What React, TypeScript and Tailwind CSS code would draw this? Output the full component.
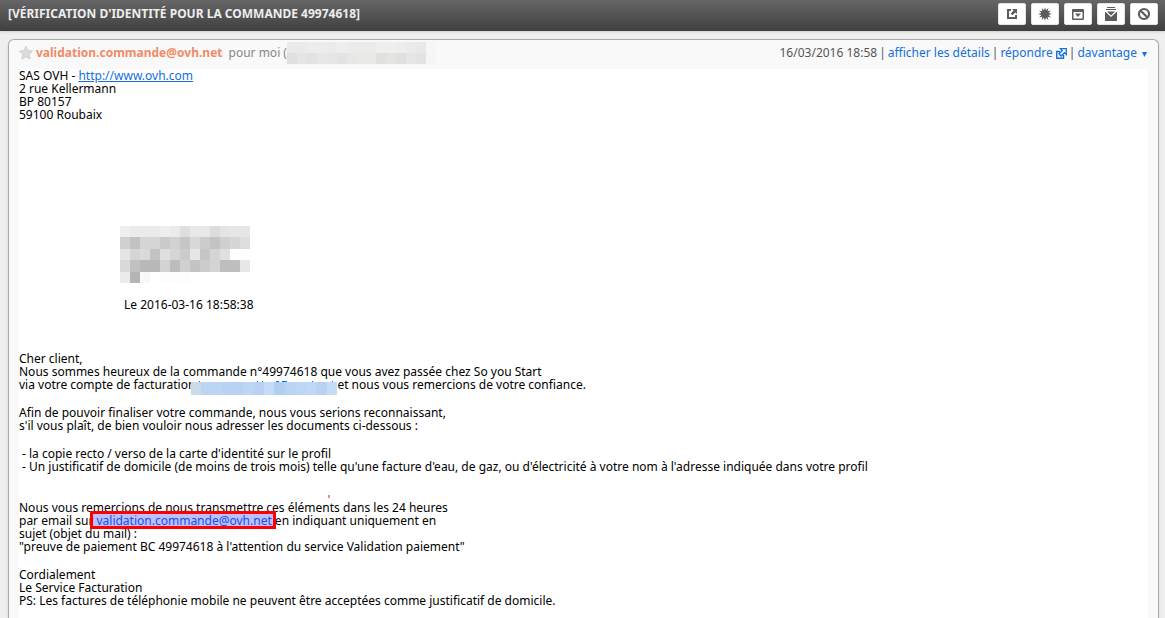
import type { FC, ReactNode } from "react";
import React from "react";

const Mosaic: FC<{
  rows: string[];
  cellW: number;
  cellH: number;
  className: string;
}> = ({ rows, cellW, cellH, className }) => {
  const cols = rows[0].split(" ").length;
  return (
    <svg
      className={className}
      viewBox={`0 0 ${cols * cellW} ${rows.length * cellH}`}
      preserveAspectRatio="none"
      shapeRendering="crispEdges"
      aria-hidden="true"
    >
      {rows.map((row, y) =>
        row
          .split(" ")
          .map((fill, x) => (
            <rect
              key={`${x}-${y}`}
              x={x * cellW}
              y={y * cellH}
              width={cellW}
              height={cellH}
              fill={`#${fill}`}
            />
          ))
      )}
    </svg>
  );
};

const nameRows = [
  "eeeeee ebebeb ebebeb ebebeb eeeeee ebebeb dedede e8e8e8 e8e8e8 dcdcdc e4e4e4 e6e6e6 e6e6e6",
  "d0d0d0 c2c2c2 d6d6d6 d5d5d5 cacaca d1d1d1 c6c6c6 d8d8d8 cbcbcb c4c4c4 cfcfcf d6d6d6 dedede",
  "e5e5e5 d5d5d5 dadada c3c3c3 dfdfdf d5d5d5 cbcbcb e6e6e6 c6c6c6 d5d5d5 e0e0e0 ffffff ffffff",
  "dadada c1c1c1 b9b9b9 b9b9b9 d3d3d3 bdbdbd d0d0d0 c4c4c4 cccccc d4d4d4 bebebe bebebe e7e7e7",
  "ebebeb b5b5b5 f8f8f8 ffffff fdfdfd fdfdfd fdfdfd ffffff ffffff ffffff ffffff ffffff ffffff",
];

const recipientRows = [
  "eaeaea eaeaea ededed ececec ebebeb eeeeee ebebea ebebea ebebea efefef efefef ededed ebebeb e8e8e8 f6f6f6",
  "e0e0e0 e5e5e5 e2e2e2 e7e7e7 e6e6e6 e3e3e3 e7e7e7 e9e9e6 e9e9e6 e0e0de e4e4e2 e0e0de e6e6e6 e3e3e3 f6f6f6",
];

const accountRows = [
  "cddbe8 bcd5f4 bcd5f4 bad3f4 b9d2f3 bdd6f5 b9d2f3 c5dbf6 b0cff3 b9d4f5 bdd6f5 c0d8f5 b9d4f3 c5dcf6",
];

// tips of the tall letters that stick out above the account mosaic, [x, width]
const accountTips = [
  [8, 1],
  [66, 1],
  [71, 1],
  [85, 3],
  [91, 5],
  [121, 1],
  [141, 1],
];

const burstPoints = Array.from({ length: 24 }, (_, i) => {
  const r = i % 2 ? 3.8 : 6.8;
  const a = (i * Math.PI) / 12;
  return `${7 + r * Math.sin(a)},${7 - r * Math.cos(a)}`;
}).join(" ");

const ToolButton: FC<{ label: string; children: ReactNode }> = ({
  label,
  children,
}) => (
  <button
    type="button"
    aria-label={label}
    className="flex h-[22px] w-7 items-center justify-center rounded-xs border border-[#e4e4e4] bg-white text-[#5c5c5c]"
  >
    <svg width="14" height="14" viewBox="0 0 14 14" fill="none">
      {children}
    </svg>
  </button>
);

const Toolbar = () => (
  <div className="flex gap-[5px]">
    <ToolButton label="Ouvrir dans une nouvelle fenêtre">
      <path d="M6 3H3v8h8V8" stroke="currentColor" strokeWidth="2" />
      <path d="M7 2h5v5l-1.600-1.600L7.500 8.300 5.700 6.500l2.900-2.900z" fill="currentColor" />
    </ToolButton>
    <ToolButton label="Marquer comme non lu">
      <polygon points={burstPoints} fill="currentColor" />
    </ToolButton>
    <ToolButton label="Archiver">
      <path
        d="M2 2h10a1 1 0 0 1 1 1v9a1 1 0 0 1-1 1H2a1 1 0 0 1-1-1V3a1 1 0 0 1 1-1zM2.500 5v6.500h9V5z"
        fill="currentColor"
        fillRule="evenodd"
      />
      <path d="M4 6.500h6L7 10z" fill="currentColor" />
    </ToolButton>
    <ToolButton label="Déplacer">
      <path d="M3 .5h8M2 2.500h10" stroke="currentColor" />
      <path
        d="M1 4.500l6 5.500 6-5.500V14H1zM3 4.500h8L7 8.500z"
        fill="currentColor"
      />
    </ToolButton>
    <ToolButton label="Indésirable">
      <circle cx="7" cy="7" r="5" stroke="currentColor" strokeWidth="2.2" />
      <path d="M3.500 3.500l7 7" stroke="currentColor" strokeWidth="2.2" />
    </ToolButton>
  </div>
);

const MessageHeader = () => (
  <div className="flex h-[29px] items-center justify-between pr-[11px] pb-[3px] pl-[10px] text-xs">
    <div className="flex items-center">
      <button type="button" aria-label="Suivre" className="mr-[3px]">
        <svg width="14" height="14" viewBox="0 0 14 14" className="block">
          <path
            d="M7 .5l1.900 4.200 4.600.5-3.400 3.100 1 4.700L7 10.700 2.900 13l1-4.700L.5 5.200l4.600-.5z"
            fill="#dcdcdc"
            stroke="#cecece"
          />
        </svg>
      </button>
      <span className="font-bold text-[#f08b68]">
        validation.commande@ovh.net
      </span>
      <span className="ml-[6px] text-[#888]">pour moi (</span>
      <Mosaic
        rows={recipientRows}
        cellW={10}
        cellH={11}
        className="h-[22px] w-[149px]"
      />
    </div>
    <div className="flex items-center gap-[2px] text-[#555]">
      <span>16/03/2016 18:58</span>
      <span>|</span>
      <a href="#details" className="text-[#1370dc]">
        afficher les détails
      </a>
      <span>|</span>
      <a href="#reply" className="flex items-center gap-[3px] text-[#1370dc]">
        répondre
        <svg width="11" height="11" viewBox="0 0 11 11" fill="none">
          <path
            d="M4 3.500H.7v6.800h6.800V7"
            stroke="currentColor"
            strokeWidth="1.400"
          />
          <path
            d="M4.500.7h5.800v5.800L8.500 4.700 5.200 8 3 5.800l3.300-3.300z"
            fill="#fff"
            stroke="currentColor"
            strokeWidth="1.300"
          />
        </svg>
      </a>
      <span>|</span>
      <a href="#more" className="flex items-center gap-[5px] text-[#1370dc]">
        davantage
        <svg width="5" height="5" viewBox="0 0 5 5" className="mt-[3px]">
          <path d="M0 0h5L2.500 5z" fill="currentColor" />
        </svg>
      </a>
    </div>
  </div>
);

const MessageBody = () => (
  <div className="mx-[10px] flex flex-1 flex-col gap-[15px] bg-white text-xs leading-[13px] text-black">
    <address className="not-italic">
      SAS OVH -{" "}
      <a href="http://www.ovh.com" className="text-[#1370dc] underline">
        http://www.ovh.com
      </a>
      <br />
      2 rue Kellermann
      <br />
      BP 80157
      <br />
      59100 Roubaix
    </address>

    <div className="mt-[90px] mb-[26px] ml-[101px]">
      <Mosaic
        rows={nameRows}
        cellW={10}
        cellH={11}
        className="h-[57px] w-[130px]"
      />
      <p className="mt-[15px] ml-1">Le 2016-03-16 18:58:38</p>
    </div>

    <p>
      Cher client,
      <br />
      Nous sommes heureux de la commande n°49974618 que vous avez passée chez So
      you Start
      <br />
      via votre compte de facturation
      <span className="relative -ml-1 inline-block h-[13px] w-[146px] align-top">
        <Mosaic
          rows={accountRows}
          cellW={10}
          cellH={13}
          className="absolute top-1 left-0 h-[13px] w-full"
        />
        <svg
          width="146"
          height="1"
          className="absolute top-[3px] left-0"
          shapeRendering="crispEdges"
        >
          {accountTips.map(([x, w]) => (
            <rect key={x} x={x} y="0" width={w} height="1" fill="#1370dc" />
          ))}
        </svg>
      </span>
      et nous vous remercions de votre confiance.
    </p>

    <p>
      Afin de pouvoir finaliser votre commande, nous vous serions reconnaissant,
      <br />
      s'il vous plaît, de bien vouloir nous adresser les documents ci-dessous :
    </p>

    <ul className="pl-[3px]">
      <li>- la copie recto / verso de la carte d'identité sur le profil</li>
      <li>
        - Un justificatif de domicile (de moins de trois mois) telle qu'une
        facture d'eau, de gaz, ou d'électricité à votre nom à l'adresse indiquée
        dans votre profil
      </li>
    </ul>

    <p className="relative mt-[13px]">
      Nous vous remercions de nous transmettre ces éléments dans les 24 heures
      <span className="absolute -top-[6px] left-[309px] h-[3px] w-[2px] bg-[#ff8080]" />
      <br />
      par email sur{" "}
      <a
        href="mailto:validation.commande@ovh.net"
        className="relative text-[#1370dc] underline"
      >
        validation.commande@ovh.net
        <span className="absolute -top-px -right-1 -left-[6px] h-[18px] border-3 border-[#f00] bg-[#0000ff]/25" />
      </a>{" "}
      en indiquant uniquement en
      <br />
      sujet (objet du mail) :
      <br />
      "preuve de paiement BC 49974618 à l'attention du service Validation
      paiement"
    </p>

    <p>
      Cordialement
      <br />
      Le Service Facturation
      <br />
      PS: Les factures de téléphonie mobile ne peuvent être acceptées comme
      justificatif de domicile.
    </p>
  </div>
);

export default function App() {
  return (
    <div className="flex min-h-screen flex-col bg-[#efefef] font-['Noto_Sans',sans-serif]">
      <header className="flex h-[31px] items-center justify-between bg-linear-to-b from-[#666] to-[#404040] pr-[7px] pb-[3px] pl-2 shadow-sm">
        <h1 className="text-xs font-bold text-[#ededed]">
          [VÉRIFICATION D'IDENTITÉ POUR LA COMMANDE 49974618]
        </h1>
        <Toolbar />
      </header>
      <main className="mt-2 mr-[6px] ml-2 flex flex-1 flex-col rounded-t-md border border-b-0 border-[#aaa] bg-[#f9f9f9] shadow-sm">
        <MessageHeader />
        <MessageBody />
      </main>
    </div>
  );
}
